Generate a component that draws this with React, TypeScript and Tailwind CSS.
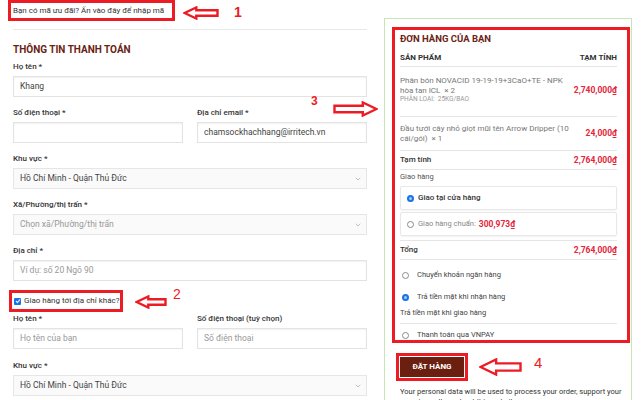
import React from "react";
import { ChevronDown } from "lucide-react";

function Arrow({ w, h, right, className }: { w: number; h: number; right?: boolean; className: string }) {
  const hw = h * 0.95;
  const pts = `1.5,${h / 2} ${hw},1.5 ${hw},${h * 0.3} ${w - 1.5},${h * 0.3} ${w - 1.5},${h * 0.7} ${hw},${h * 0.7} ${hw},${h - 1.5}`;
  return (
    <svg width={w} height={h} viewBox={`0 0 ${w} ${h}`} className={`${className} ${right ? "-scale-x-100" : ""}`}>
      <polygon points={pts} fill="none" stroke="#ec1c24" strokeWidth={2.4} strokeLinejoin="miter" />
    </svg>
  );
}

function Label({ children }: { children: React.ReactNode }) {
  return <div className="h-[12px] text-[8px] leading-[12px] font-medium text-[#333]">{children}</div>;
}

function Input({ value, placeholder }: { value?: string; placeholder?: string }) {
  return (
    <div className="mt-[3px] flex h-[21px] items-center border border-[#e3e3e3] bg-white px-[6px] text-[8.5px] shadow-[inset_0_1px_2px_rgba(0,0,0,0.06)]">
      {value ? <span className="text-[#444]">{value}</span> : <span className="text-[#999]">{placeholder}</span>}
    </div>
  );
}

function Select({ value, placeholder }: { value?: string; placeholder?: string }) {
  return (
    <div className="mt-[3px] flex h-[21px] items-center justify-between border border-[#e6e6e6] bg-[#fafafa] pl-[6px] pr-[4px] text-[8.5px]">
      {value ? <span className="text-[#444]">{value}</span> : <span className="text-[#999]">{placeholder}</span>}
      <ChevronDown size={8} strokeWidth={1.5} className="text-[#888]" />
    </div>
  );
}

function Radio({ checked }: { checked?: boolean }) {
  return checked ? (
    <span className="flex h-[7px] w-[7px] items-center justify-center rounded-full bg-[#1a73e8]">
      <span className="h-[3px] w-[3px] rounded-full bg-white/60" />
    </span>
  ) : (
    <span className="h-[7px] w-[7px] rounded-full border border-[#8a8a8a] bg-white" />
  );
}

export default function App() {
  return (
    <div className="relative flex h-[400px] w-[643px] overflow-hidden bg-white font-['Roboto',sans-serif]">
      {/* Left column */}
      <div className="ml-[13px] w-[354px]">
        <div className="-ml-[5px] flex h-[21px] w-[167px] items-center whitespace-nowrap border-[3px] border-[#ec1c24] pl-[2px] text-[8px] text-[#333]">
          Bạn có mã ưu đãi? Ấn vào đây để nhập mã
        </div>
        <div className="mt-[8px] border-t border-[#e8e8e8]" />
        <div className="mt-[13px] h-[14px] text-[10px] leading-[14px] font-bold text-[#6a2313]">THÔNG TIN THANH TOÁN</div>

        <div className="mt-[4px]">
          <Label>Họ tên *</Label>
          <Input value="Khang" />
        </div>
        <div className="mt-[10px] grid grid-cols-2 gap-[14px]">
          <div>
            <Label>Số điện thoại *</Label>
            <Input />
          </div>
          <div>
            <Label>Địa chỉ email *</Label>
            <Input value="chamsockhachhang@irritech.vn" />
          </div>
        </div>
        <div className="mt-[10px]">
          <Label>Khu vực *</Label>
          <Select value="Hồ Chí Minh - Quận Thủ Đức" />
        </div>
        <div className="mt-[10px]">
          <Label>Xã/Phường/thị trấn *</Label>
          <Select placeholder="Chọn xã/Phường/thị trấn" />
        </div>
        <div className="mt-[10px]">
          <Label>Địa chỉ *</Label>
          <Input placeholder="Ví dụ: số 20 Ngõ 90" />
        </div>

        <div className="-ml-[4px] mt-[9px] flex h-[22px] w-[114px] items-center border-[3px] border-[#ec1c24] pl-[2px]">
          <span className="flex h-[7px] w-[7px] items-center justify-center rounded-[1px] bg-[#1a73e8]">
            <svg width="6" height="6" viewBox="0 0 6 6">
              <path d="M1 3.2 L2.4 4.5 L5 1.5" fill="none" stroke="white" strokeWidth="1.1" />
            </svg>
          </span>
          <span className="ml-[3px] text-[8px] text-[#333]">Giao hàng tới địa chỉ khác?</span>
        </div>

        <div className="mt-[1px] grid grid-cols-2 gap-[14px]">
          <div>
            <Label>Họ tên *</Label>
            <Input placeholder="Họ tên của bạn" />
          </div>
          <div>
            <Label>Số điện thoại (tuỳ chọn)</Label>
            <Input placeholder="Số điện thoại" />
          </div>
        </div>
        <div className="mt-[11px]">
          <Label>Khu vực *</Label>
          <Select value="Hồ Chí Minh - Quận Thủ Đức" />
        </div>
      </div>

      {/* Right column */}
      <div className="ml-[17px] w-[248px] pt-[18px]">
        <div className="h-[400px] border border-[#c8e6b5] pl-[7px] pr-[1px] pt-[8px]">
          <div className="h-[316px] w-[238px] overflow-hidden border-[3px] border-[#ec1c24] pl-[5px] pr-[10px] pt-[3px]">
            <div className="h-[12px] text-[9.5px] leading-[12px] font-bold text-[#6a2313]">ĐƠN HÀNG CỦA BẠN</div>
            <div className="mt-[7px] flex justify-between border-b border-[#e5e5e5] pb-[2px] text-[8px] leading-[12px] font-bold text-[#333]">
              <span>SẢN PHẨM</span>
              <span>TẠM TÍNH</span>
            </div>
            <div className="flex items-center justify-between border-b border-[#e5e5e5] pb-[12px] pt-[9px]">
              <div className="w-[168px]">
                <div className="text-[8px] leading-[9.5px] text-[#777]">Phân bón NOVACID 19-19-19+3CaO+TE - NPK hòa tan ICL&nbsp; × 2</div>
                <div className="text-[6.5px] leading-[9px] text-[#999]">PHÂN LOẠI:&nbsp; 25KG/BAO</div>
              </div>
              <span className="text-[8.5px] font-bold text-[#e3263a]">2,740,000₫</span>
            </div>
            <div className="flex items-center justify-between border-b border-[#e5e5e5] py-[7px]">
              <div className="w-[170px] text-[8px] leading-[9.5px] text-[#777]">Đầu tưới cây nhỏ giọt mũi tên Arrow Dripper (10 cái/gói)&nbsp; × 1</div>
              <span className="text-[8.5px] font-bold text-[#e3263a]">24,000₫</span>
            </div>
            <div className="flex items-center justify-between border-b border-[#e5e5e5] pb-[4px] pt-[4px] text-[8px] leading-[10px]">
              <span className="font-medium text-[#333]">Tạm tính</span>
              <span className="text-[8.5px] font-bold text-[#e3263a]">2,764,000₫</span>
            </div>
            <div className="mt-[2px] text-[7.5px] leading-[10px] text-[#555]">Giao hàng</div>
            <div className="mt-[4px] flex h-[24px] items-center rounded-[2px] border border-[#e8e8e8] pl-[6px] shadow-[0_1px_2px_rgba(0,0,0,0.05)]">
              <Radio checked />
              <span className="ml-[4px] text-[8px] font-medium text-[#333]">Giao tại cửa hàng</span>
            </div>
            <div className="mt-[2px] flex h-[24px] items-center rounded-[2px] border border-[#e8e8e8] pl-[6px] shadow-[0_1px_2px_rgba(0,0,0,0.05)]">
              <Radio />
              <span className="ml-[4px] text-[7.5px] text-[#888]">Giao hàng chuẩn:</span>
              <span className="ml-[3px] text-[8.5px] font-bold text-[#e3263a]">300,973₫</span>
            </div>
            <div className="mt-[4px] flex items-center justify-between border-y border-[#e5e5e5] pb-[4px] pt-[4px] text-[8px] leading-[10px]">
              <span className="font-medium text-[#333]">Tổng</span>
              <span className="text-[8.5px] font-bold text-[#e3263a]">2,764,000₫</span>
            </div>
            <div className="mt-[10px] flex items-center pl-[2px] text-[7.5px] leading-[10px] text-[#444]">
              <Radio />
              <span className="ml-[8px]">Chuyển khoản ngân hàng</span>
            </div>
            <div className="mt-[12px] flex items-center pl-[2px] text-[7.5px] leading-[10px] text-[#444]">
              <Radio checked />
              <span className="ml-[8px]">Trả tiền mặt khi nhận hàng</span>
            </div>
            <div className="mt-[6px] border-b border-[#e5e5e5] pb-[5px] text-[7.5px] leading-[10px] text-[#444]">Trả tiền mặt khi giao hàng</div>
            <div className="mt-[6px] flex items-center pl-[2px] text-[7.5px] leading-[10px] text-[#444]">
              <Radio />
              <span className="ml-[8px]">Thanh toán qua VNPAY</span>
            </div>
          </div>
          <div className="ml-[4px] mt-[10px] w-[72px] border-[3px] border-[#ec1c24] p-[1px]">
            <div className="flex h-[20px] items-center justify-center bg-[#6a1f10] text-[8px] font-bold text-white">ĐẶT HÀNG</div>
          </div>
          <div className="ml-[8px] mt-[6px] w-[236px] text-[7.5px] leading-[10px] text-[#333]">
            Your personal data will be used to process your order, support your experience throughout this website.
          </div>
        </div>
      </div>

      {/* Annotations */}
      <Arrow w={36} h={14} className="absolute left-[183px] top-[6px]" />
      <span className="absolute left-[234px] top-[4px] font-['Liberation_Sans',sans-serif] text-[14px] leading-[16px] font-bold text-[#ec1c24]">1</span>
      <span className="absolute left-[311px] top-[93px] font-['Liberation_Sans',sans-serif] text-[12px] leading-[16px] font-bold text-[#ec1c24]">3</span>
      <Arrow w={45} h={16} right className="absolute left-[333px] top-[101px]" />
      <Arrow w={32} h={14} className="absolute left-[135px] top-[295px]" />
      <span className="absolute left-[173px] top-[286px] font-['Liberation_Sans',sans-serif] text-[14px] leading-[16px] text-[#ec1c24]">2</span>
      <Arrow w={43} h={18} className="absolute left-[479px] top-[358px]" />
      <span className="absolute left-[534px] top-[354px] font-['Liberation_Sans',sans-serif] text-[15px] leading-[18px] font-medium text-[#ec1c24]">4</span>
    </div>
  );
}
